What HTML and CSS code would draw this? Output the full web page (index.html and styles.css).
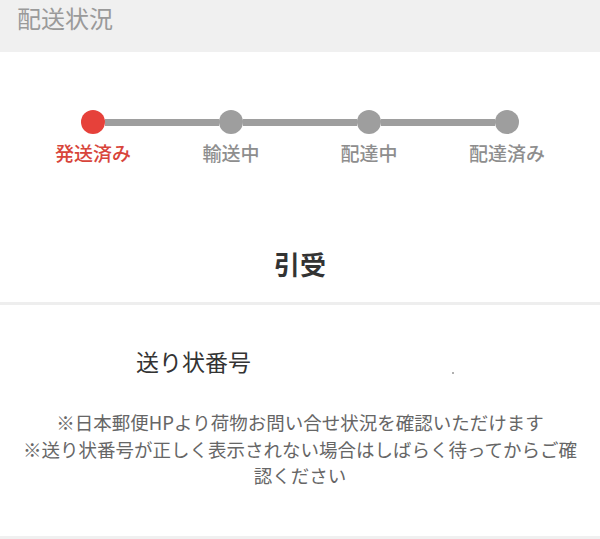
FILE: index.html
```html
<!DOCTYPE html>
<html lang="ja">
<head>
<meta charset="utf-8">
<title>配送状況</title>
<link rel="stylesheet" href="styles.css">
</head>
<body>
<header class="header"><h1 class="header-title">配送状況</h1></header>
<main class="content">
  <section class="progress">
    <div class="track">
      <span class="dot dot-active"></span>
      <span class="seg"></span>
      <span class="dot"></span>
      <span class="seg"></span>
      <span class="dot"></span>
      <span class="seg"></span>
      <span class="dot"></span>
    </div>
    <div class="labels">
      <span class="label label-active">発送済み</span>
      <span class="label">輸送中</span>
      <span class="label">配達中</span>
      <span class="label">配達済み</span>
    </div>
  </section>
  <div class="status">引受</div>
  <div class="divider"></div>
  <div class="tracking">
    <span class="tracking-label">送り状番号</span>
    <span class="tracking-value"><span class="speck"></span></span>
  </div>
  <p class="notes">※日本郵便HPより荷物お問い合せ状況を確認いただけます<br>※送り状番号が正しく表示されない場合はしばらく待ってからご確認ください</p>
</main>
<div class="footer-band"></div>
</body>
</html>
```

FILE: styles.css
```css
* { box-sizing: border-box; }
html, body { margin: 0; padding: 0; }
body {
  width: 600px;
  height: 539px;
  overflow: hidden;
  background: #ffffff;
  font-family: "Noto Sans CJK JP", "Noto Sans", sans-serif;
  display: flex;
  flex-direction: column;
}
.header {
  height: 52px;
  background: #f0f0f0;
  padding: 3px 0 0 17px;
}
.header-title {
  margin: 0;
  font-size: 24px;
  line-height: 30px;
  font-weight: 400;
  color: #9a9a9a;
}
.content {
  flex: 1;
  display: flex;
  flex-direction: column;
}
.progress {
  padding-top: 58px;
}
.track {
  display: flex;
  align-items: center;
  margin: 0 81px;
  height: 24px;
}
.dot {
  width: 24px;
  height: 24px;
  border-radius: 50%;
  background: #9e9e9e;
  flex: none;
}
.dot-active { background: #e6413a; }
.seg {
  flex: 1;
  height: 7px;
  background: #9e9e9e;
}
.labels {
  display: grid;
  grid-template-columns: repeat(4, 1fr);
  margin: 7px 24px 0;
}
.label {
  text-align: center;
  font-size: 19px;
  line-height: 24px;
  font-weight: 500;
  color: #8e8e8e;
}
.label-active { color: #d8453b; }
.status {
  margin-top: 81px;
  text-align: center;
  font-size: 26px;
  line-height: 36px;
  font-weight: 700;
  color: #333333;
  padding-bottom: 20px;
}
.divider {
  height: 3px;
  background: #eeeeee;
}
.tracking {
  display: flex;
  align-items: center;
  margin-top: 41px;
  padding-left: 136px;
  height: 30px;
}
.tracking-label {
  font-size: 23px;
  line-height: 30px;
  color: #333333;
  width: 316px;
}
.tracking-value {
  display: flex;
  align-self: flex-end;
  padding-bottom: 2px;
}
.speck {
  width: 2px;
  height: 2px;
  background: #b0b0b0;
}
.notes {
  margin: 33px 20px 0;
  text-align: center;
  font-size: 18.5px;
  line-height: 26.5px;
  color: #666666;
}
.footer-band {
  height: 3px;
  background: #f0f0f0;
  flex: none;
}
```
